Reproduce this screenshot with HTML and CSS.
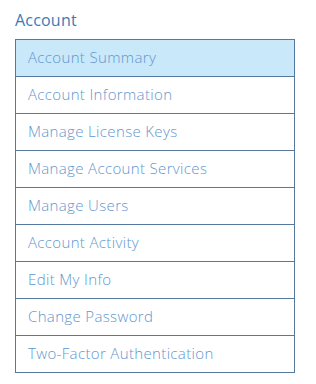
FILE: index.html
```html
<!DOCTYPE html>
<html lang="en">
<head>
    <meta charset="UTF-8">
    <meta name="viewport" content="width=device-width, initial-scale=1.0">
    <title>Account</title>
    <link rel="stylesheet" href="styles.css">
</head>
<body>
    <div class="sidebar">
        <h2 class="sidebar-title">Account</h2>
        <ul class="menu">
            <li class="menu-item active"><a href="#">Account Summary</a></li>
            <li class="menu-item"><a href="#">Account Information</a></li>
            <li class="menu-item"><a href="#">Manage License Keys</a></li>
            <li class="menu-item"><a href="#">Manage Account Services</a></li>
            <li class="menu-item"><a href="#">Manage Users</a></li>
            <li class="menu-item"><a href="#">Account Activity</a></li>
            <li class="menu-item"><a href="#">Edit My Info</a></li>
            <li class="menu-item"><a href="#">Change Password</a></li>
            <li class="menu-item"><a href="#">Two-Factor Authentication</a></li>
        </ul>
    </div>
</body>
</html>
```

FILE: styles.css
```css
:root {
    --heading-color: #3a7bb6;
    --link-color: #5f97cf;
    --border-color: #55799f;
    --active-bg: #c9e8f9;
}

* {
    margin: 0;
    padding: 0;
    box-sizing: border-box;
}

body {
    background: #ffffff;
    font-family: 'Open Sans', sans-serif;
}

.sidebar {
    padding: 10px 21px 0 15px;
}

.sidebar-title {
    font-size: 16px;
    font-weight: 400;
    color: var(--heading-color);
    line-height: 20px;
    margin-bottom: 9px;
    letter-spacing: 0.2px;
}

.menu {
    list-style: none;
    border: 1px solid var(--border-color);
}

.menu-item + .menu-item {
    border-top: 1px solid var(--border-color);
}

.menu-item a {
    display: block;
    height: 36px;
    line-height: 34px;
    padding-left: 12px;
    font-size: 15px;
    font-weight: 300;
    letter-spacing: 0.35px;
    color: var(--link-color);
    text-decoration: none;
}

.menu-item.active a {
    background-color: var(--active-bg);
}
```
